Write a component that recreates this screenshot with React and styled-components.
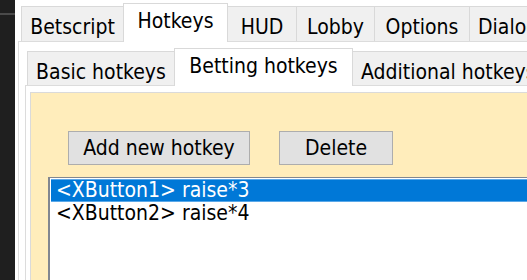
import React from 'react';
import styled, { createGlobalStyle } from 'styled-components';

const GlobalStyle = createGlobalStyle`
  html, body {
    margin: 0;
    padding: 0;
    background: #1f1f1f;
    overflow: hidden;
  }
  body {
    font-family: "DejaVu Sans Condensed", "DejaVu Sans", sans-serif;
    font-size: 21px;
    color: #000;
  }
`;

const Screen = styled.div`
  display: flex;
  width: 527px;
  height: 280px;
  overflow: hidden;
`;

const SideStrip = styled.div`
  width: 15px;
  flex-shrink: 0;
  background: #1f1f1f;
  padding-top: 13px;
  box-sizing: border-box;

  &::before {
    content: '';
    display: block;
    height: 2px;
    background: #4a4a4a;
  }
`;

const Window = styled.div`
  flex: 1;
  min-width: 0;
  background: #fff;
  padding: 3px 0 0 3px;
  overflow: hidden;
`;

const TabWidget = styled.div`
  display: flex;
  flex-direction: column;
  height: 100%;
`;

const TabStrip = styled.div`
  display: flex;
  align-items: flex-end;
  height: ${p => p.$h}px;
  padding-left: ${p => p.$offset}px;
  flex-shrink: 0;
  position: relative;
  z-index: 1;
`;

const Tab = styled.div`
  box-sizing: border-box;
  flex-shrink: 0;
  width: ${p => p.$w}px;
  height: ${p => (p.$active ? p.$h + 4 : p.$h)}px;
  margin-bottom: ${p => (p.$active ? -1 : 0)}px;
  margin-left: -1px;
  background: ${p => (p.$active ? '#fff' : '#f0f0f0')};
  border: 1px solid #d9d9d9;
  border-bottom: none;
  display: flex;
  justify-content: ${p => (p.$clip ? 'flex-start' : 'center')};
  padding-left: ${p => (p.$clip ? 8 : 0)}px;
  padding-top: ${p => (p.$active ? 5 : 8)}px;
  line-height: 24px;
  white-space: nowrap;
  overflow: hidden;
  z-index: ${p => (p.$active ? 2 : 1)};
  &:first-child { margin-left: 0; }
`;

const Pane = styled.div`
  flex: 1;
  background: #fff;
  border: 1px solid #dcdcdc;
  border-right: none;
  border-bottom: none;
  padding: ${p => p.$pt}px 0 0 ${p => p.$pl}px;
  display: flex;
  flex-direction: column;
  min-height: 0;
`;

const HotkeyPanel = styled.div`
  flex: 1;
  background: #ffedbb;
  border: 1px solid #dadada;
  border-right: none;
  border-bottom: none;
  padding: 38px 0 0 17px;
`;

const ButtonRow = styled.div`
  display: flex;
  gap: 29px;
  padding-left: 20px;
`;

const Button = styled.button`
  box-sizing: border-box;
  width: ${p => p.$w}px;
  height: 34px;
  background: #e1e1e1;
  border: 1px solid #adadad;
  border-radius: 0;
  font: inherit;
  color: #000;
  padding: 0;
`;

const ListBox = styled.div`
  margin-top: 12px;
  background: #fff;
  border: 1px solid #828790;
  border-left-width: 2px;
  border-right: none;
  padding: 1px 0 0 1px;
  height: 120px;
`;

const Item = styled.div`
  box-sizing: border-box;
  height: 23px;
  line-height: 21px;
  padding-left: 5px;
  white-space: nowrap;
  background: ${p => (p.$selected ? '#0078d7' : 'transparent')};
  color: ${p => (p.$selected ? '#fff' : '#000')};
  border-top: 1px solid ${p => (p.$selected ? '#5aa8e8' : 'transparent')};
  border-bottom: 1px solid ${p => (p.$selected ? '#5aa8e8' : 'transparent')};
`;

const mainTabs = [
  { label: 'Betscript', w: 103 },
  { label: 'Hotkeys', w: 105, active: true },
  { label: 'HUD', w: 70 },
  { label: 'Lobby', w: 79 },
  { label: 'Options', w: 96 },
  { label: 'Dialog', w: 90, clip: true },
];

const subTabs = [
  { label: 'Basic hotkeys', w: 148 },
  { label: 'Betting hotkeys', w: 179, active: true },
  { label: 'Additional hotkeys', w: 200, clip: true },
];

const hotkeys = ['<XButton1> raise*3', '<XButton2> raise*4'];

export default function App() {
  return (
    <>
      <GlobalStyle />
      <Screen>
        <SideStrip />
        <Window>
          <TabWidget>
            <TabStrip $h={38} $offset={3}>
              {mainTabs.map(t => (
                <Tab key={t.label} $w={t.w} $h={35} $active={t.active} $clip={t.clip}>{t.label}</Tab>
              ))}
            </TabStrip>
            <Pane $pt={5} $pl={6}>
              <TabWidget>
                <TabStrip $h={38} $offset={2}>
                  {subTabs.map(t => (
                    <Tab key={t.label} $w={t.w} $h={34} $active={t.active} $clip={t.clip}>{t.label}</Tab>
                  ))}
                </TabStrip>
                <Pane $pt={6} $pl={4}>
                  <HotkeyPanel>
                    <ButtonRow>
                      <Button $w={182}>Add new hotkey</Button>
                      <Button $w={114}>Delete</Button>
                    </ButtonRow>
                    <ListBox>
                      {hotkeys.map((h, i) => (
                        <Item key={h} $selected={i === 0}>{h}</Item>
                      ))}
                    </ListBox>
                  </HotkeyPanel>
                </Pane>
              </TabWidget>
            </Pane>
          </TabWidget>
        </Window>
      </Screen>
    </>
  );
}
